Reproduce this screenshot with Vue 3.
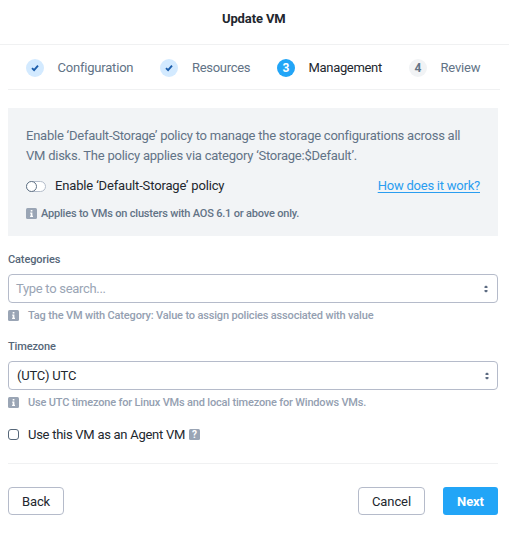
<script setup>
const steps = [
  { label: 'Configuration', state: 'done', key: 'configuration' },
  { label: 'Resources', state: 'done', key: 'resources' },
  { label: 'Management', state: 'current', number: 3, key: 'management' },
  { label: 'Review', state: 'todo', number: 4, key: 'review' },
]
</script>

<template>
  <main class="dialog">
    <header class="title"><span>Update VM</span></header>

    <nav class="steps">
      <div v-for="step in steps" :key="step.key" class="step" :class="[step.state, step.key]">
        <span class="bullet">
          <svg v-if="step.state === 'done'" width="8" height="8" viewBox="0 0 8 8">
            <path d="M1 4.1 3.1 6.1 7 1.7" fill="none" stroke="#1b5dab" stroke-width="1.9" />
          </svg>
          <template v-else>{{ step.number }}</template>
        </span>
        <span class="step-label">{{ step.label }}</span>
      </div>
    </nav>

    <section class="policy">
      <p class="policy-text">
        <span class="line-one">Enable ‘Default-Storage’ policy to manage the storage configurations across all</span><br />
        <span class="line-two">VM disks. The policy applies via category ‘Storage:$Default’.</span>
      </p>
      <div class="policy-row">
        <span class="toggle"><i></i></span>
        <span class="toggle-label">Enable ‘Default-Storage’ policy</span>
        <a class="link">How does it work?</a>
      </div>
      <div class="policy-note">
        <svg class="info" width="11" height="11" viewBox="0 0 11 11">
          <rect width="11" height="11" rx="1.5" fill="#9aa5b5" />
          <path d="M4.7 2h1.7v1.5H4.7zM4.2 4.5h2.2v3.2h.6v1.2H4.1V7.7h.6v-2h-.5z" fill="#fff" />
        </svg>
        <span class="note-text">Applies to VMs on clusters with AOS 6.1 or above only.</span>
      </div>
    </section>

    <label class="field-label categories">Categories</label>
    <div class="select">
      <span class="placeholder">Type to search...</span>
      <svg class="arrows" width="4" height="8" viewBox="0 0 4 8">
        <path d="M.5 3V1.6L2 .6l1.5 1V3zM.5 5v1.4l1.5 1 1.5-1V5z" fill="#5c6b82" />
      </svg>
    </div>
    <div class="hint">
      <svg class="info" width="11" height="11" viewBox="0 0 11 11">
        <rect width="11" height="11" rx="1.5" fill="#9aa5b5" />
        <path d="M4.7 2h1.7v1.5H4.7zM4.2 4.5h2.2v3.2h.6v1.2H4.1V7.7h.6v-2h-.5z" fill="#fff" />
      </svg>
      <span class="hint-tag">Tag the VM with Category: Value to assign policies associated with value</span>
    </div>

    <label class="field-label timezone">Timezone</label>
    <div class="select second">
      <span class="value">(UTC) UTC</span>
      <svg class="arrows" width="4" height="8" viewBox="0 0 4 8">
        <path d="M.5 3V1.6L2 .6l1.5 1V3zM.5 5v1.4l1.5 1 1.5-1V5z" fill="#5c6b82" />
      </svg>
    </div>
    <div class="hint">
      <svg class="info" width="11" height="11" viewBox="0 0 11 11">
        <rect width="11" height="11" rx="1.5" fill="#9aa5b5" />
        <path d="M4.7 2h1.7v1.5H4.7zM4.2 4.5h2.2v3.2h.6v1.2H4.1V7.7h.6v-2h-.5z" fill="#fff" />
      </svg>
      <span class="hint-utc">Use UTC timezone for Linux VMs and local timezone for Windows VMs.</span>
    </div>

    <div class="agent">
      <span class="checkbox"></span>
      <span class="agent-label">Use this VM as an Agent VM</span>
      <span class="help">?</span>
    </div>

    <footer class="actions">
      <button class="back"><span>Back</span></button>
      <button class="cancel"><span>Cancel</span></button>
      <button class="next"><span>Next</span></button>
    </footer>
  </main>
</template>

<style>
body {
  background: #fff;
}
</style>

<style scoped>
.dialog {
  box-sizing: border-box;
  width: 509px;
  height: 535px;
  overflow: hidden;
  background: #fff;
  color: #22272e;
  font-family: Roboto, 'Liberation Sans', sans-serif;
  font-size: 13px;
  white-space: nowrap;
}
.title {
  box-sizing: border-box;
  height: 45px;
  padding: 9px 0 0 222px;
  border-bottom: 1px solid #f0f1f2;
  line-height: 20px;
  font-weight: 700;
}
.title span { letter-spacing: -0.13px; }
.steps {
  display: flex;
  align-items: center;
  box-sizing: border-box;
  height: 45px;
  margin: 0 9px 0 8px;
  padding: 1px 0 0 18px;
  border-bottom: 1px solid #f0f1f2;
  color: #627386;
}
.step {
  display: flex;
  align-items: center;
  gap: 14px;
}
.configuration { width: 134px; }
.resources { width: 117px; }
.management { width: 132px; }
.bullet {
  display: flex;
  align-items: center;
  justify-content: center;
  width: 18px;
  height: 18px;
  border-radius: 50%;
  background: #f1f3f5;
  font-size: 12px;
  font-weight: 700;
}
.done .bullet { background: #d3eaff; }
.current .bullet { background: #22a5f7; color: #fff; }
.current { color: #22272e; }
.configuration .step-label { margin-left: -0.5px; letter-spacing: -0.2px; }
.resources .step-label { letter-spacing: -0.3px; }
.management .step-label { margin-left: -0.5px; letter-spacing: -0.32px; }
.review .step-label { margin-left: -0.5px; letter-spacing: -0.2px; }
.policy {
  box-sizing: border-box;
  width: 490px;
  height: 128px;
  margin: 18px 0 0 8px;
  padding: 18px 18px 0;
  background: #f2f4f6;
  color: #627386;
}
.policy-text { margin: 0; line-height: 20px; }
.line-one { letter-spacing: -0.235px; }
.line-two { letter-spacing: -0.24px; }
.policy-row {
  display: flex;
  align-items: center;
  height: 20px;
  margin-top: 9px;
}
.toggle {
  display: flex;
  align-items: center;
  box-sizing: border-box;
  width: 20px;
  height: 11px;
  margin-top: 2px;
  border: 1px solid #b4bdcb;
  border-radius: 6px;
  background: #fff;
}
.toggle i {
  box-sizing: border-box;
  flex: none;
  width: 11px;
  height: 11px;
  margin-left: -1px;
  border: 1px solid #627386;
  border-radius: 50%;
  background: #fff;
}
.toggle-label { margin-left: 9px; color: #22272e; letter-spacing: -0.15px; }
.link {
  margin-left: auto;
  color: #2a9df0;
  letter-spacing: -0.23px;
  text-decoration: underline;
  text-underline-offset: 2px;
}
.policy-note {
  display: flex;
  align-items: center;
  gap: 4px;
  height: 16px;
  margin-top: 10px;
  font-size: 11px;
  font-weight: 500;
  letter-spacing: -0.19px;
}
.info { flex: none; }
.field-label {
  display: block;
  height: 16px;
  margin-left: 8px;
  line-height: 16px;
  font-size: 11px;
  font-weight: 500;
  letter-spacing: -0.12px;
  color: #566779;
}
.categories { margin-top: 16px; }
.timezone { margin-top: 16px; }
.select {
  display: flex;
  align-items: center;
  justify-content: space-between;
  box-sizing: border-box;
  width: 490px;
  height: 29px;
  margin: 6px 0 0 8px;
  padding: 0 9px 0 7px;
  border: 1px solid #b5bbca;
  border-radius: 4px;
}
.second { padding: 0 8px; }
.value { letter-spacing: -0.2px; }
.placeholder { color: #9aa5b5; letter-spacing: -0.3px; }
.hint {
  display: flex;
  align-items: center;
  gap: 9px;
  height: 16px;
  margin: 4px 0 0 8px;
  font-size: 11px;
  font-weight: 500;
  letter-spacing: -0.165px;
  color: #94a0b1;
}
.hint-utc { letter-spacing: -0.18px; }
.agent {
  display: flex;
  align-items: center;
  height: 20px;
  margin: 14px 0 0 8px;
}
.checkbox {
  box-sizing: border-box;
  width: 11px;
  height: 11px;
  border: 1px solid #566779;
  border-radius: 3px;
}
.agent-label { margin-left: 9px; letter-spacing: -0.27px; }
.help {
  width: 11px;
  height: 11px;
  margin-left: 4px;
  border-radius: 1.5px;
  background: #9aa5b5;
  color: #fff;
  font-size: 10px;
  font-weight: 700;
  line-height: 11px;
  text-align: center;
}
.actions {
  display: flex;
  width: 490px;
  margin: 19px 0 0 8px;
  padding-top: 23px;
  border-top: 1px solid #f0f1f2;
}
button {
  display: flex;
  align-items: center;
  justify-content: center;
  box-sizing: border-box;
  height: 28px;
  padding: 0;
  border: 1px solid #b5bbca;
  border-radius: 4px;
  background: #fff;
  color: #22272e;
  font: inherit;
  letter-spacing: -0.1px;
}
.back { width: 56px; }
.cancel { width: 67px; margin-left: auto; }
.next {
  width: 55px;
  margin-left: 18px;
  border: 0;
  border-radius: 3px;
  background: #22a5f7;
  color: #fff;
  font-weight: 700;
}
</style>
